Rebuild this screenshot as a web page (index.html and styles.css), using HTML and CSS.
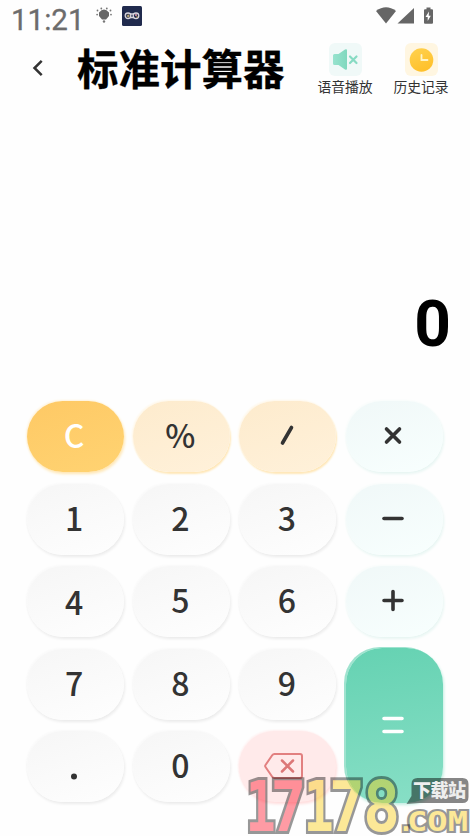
FILE: index.html
```html
<!DOCTYPE html>
<html lang="zh-CN">
<head>
<meta charset="utf-8">
<title>标准计算器</title>
<link rel="stylesheet" href="styles.css">
</head>
<body>
<div class="app">
  <div class="status">
    <span class="time">11:21</span>
    <svg class="sun" width="16" height="16" viewBox="0 0 16 16"><path d="M3 5.500Q8-.5 13 5.500v3.500l-3 3.500H6L3 9Z" fill="#666"/><g fill="#777"><circle cx="5.300" cy="1.500" r=".9"/><circle cx="10.800" cy="1.500" r=".9"/><circle cx="1.500" cy="3.500" r=".9"/><circle cx="14.500" cy="3.500" r=".9"/><circle cx="1.100" cy="7.600" r=".9"/><circle cx="15" cy="7.600" r=".9"/><circle cx="8" cy="14.500" r="1.200"/></g></svg>
    <svg class="game" width="20" height="20" viewBox="0 0 20 20"><rect width="20" height="20" rx="1.500" fill="#202a4d"/><g fill="none" stroke="#d8d4dc" stroke-width="1.300"><circle cx="6" cy="9.800" r="2.800"/><circle cx="14" cy="9.800" r="2.800"/><path d="M8 8h4M8 11.500h4"/></g><path d="M4.700 10h3M6.200 8.500v3" stroke="#d5bd7e"/><circle cx="14" cy="9" r="1" fill="#eda0ac"/><circle cx="15" cy="11" r=".7" fill="#d5b14e"/></svg>
    <svg class="signals" width="60" height="18" viewBox="0 0 60 18" fill="#666"><path d="M0 4Q10-3.500 20 4L10 16.500Z"/><path d="M38 1v15.500H21.500Z"/><path d="M49 2.300h1.500V.5h4v1.800H56q1 0 1 1v12.400q0 1-1 1h-7q-1 0-1-1V3.300q0-1 1-1Z"/><path d="M53 4.500l-3.500 5.500h2.200v4l3.100-5.300h-2.100Z" fill="#fff"/></svg>
  </div>
  <header class="bar">
    <svg class="back" width="12" height="18" viewBox="0 0 12 18"><path d="M9.700 1.800L2.500 9l7.200 7.200" fill="none" stroke="#333" stroke-width="2.500"/></svg>
    <h1>标准计算器</h1>
    <div class="tool voice">
      <svg width="33" height="33" viewBox="0 0 33 33"><defs><linearGradient id="g1" x2="1"><stop stop-color="#97e3ce"/><stop offset="1" stop-color="#80d8be"/></linearGradient></defs><rect width="33" height="33" rx="6" fill="#f0f9f8"/><path d="M5.500 11h4l6.500-4.500q2-1 2 1v18q0 2-2 1l-6.500-4.500h-4q-1.500 0-1.500-1.500v-8q0-1.500 1.500-1.500Z" fill="url(#g1)"/><path d="M21 13.500l6.500 6.500m0-6.500L21 20" stroke="#87dbc3" stroke-width="2.200" stroke-linecap="round"/></svg>
      <span>语音播放</span>
    </div>
    <div class="tool">
      <svg width="33" height="33" viewBox="0 0 33 33"><defs><linearGradient id="g2" x2=".4" y2="1"><stop stop-color="#ffd250"/><stop offset="1" stop-color="#ffc12c"/></linearGradient></defs><rect width="33" height="33" rx="6" fill="#fff6e1"/><circle cx="16.500" cy="17" r="11.800" fill="url(#g2)"/><path d="M16.500 12v5h6" fill="none" stroke="#fff4c7" stroke-width="1.800" stroke-linecap="round"/></svg>
      <span>历史记录</span>
    </div>
  </header>
  <div class="display">0</div>
  <main class="keys">
    <button class="key clear">C</button>
    <button class="key func">%</button>
    <button class="key func"><svg width="30" height="30" viewBox="0 0 30 30"><path d="M10.500 24L19.500 8.500"/></svg></button>
    <button class="key op"><svg width="30" height="30" viewBox="0 0 30 30"><path d="M9.500 10l13 13m0-13l-13 13"/></svg></button>
    <button class="key">1</button>
    <button class="key">2</button>
    <button class="key">3</button>
    <button class="key op"><svg width="30" height="30" viewBox="0 0 30 30"><path d="M7 16.500h18"/></svg></button>
    <button class="key low">4</button>
    <button class="key">5</button>
    <button class="key">6</button>
    <button class="key op"><svg width="30" height="30" viewBox="0 0 30 30"><path d="M7 16.500h18M16 7.500v18"/></svg></button>
    <button class="key">7</button>
    <button class="key">8</button>
    <button class="key">9</button>
    <button class="key equals"><svg width="30" height="30" viewBox="0 0 30 30"><path d="M7 9.500h18M7 22.500h18"/></svg></button>
    <button class="key"><svg width="30" height="30" viewBox="0 0 30 30"><circle class="dot" cx="15" cy="27.500" r="3"/></svg></button>
    <button class="key">0</button>
    <button class="key del"><svg width="40" height="26" viewBox="0 0 40 26"><path class="tag" d="M10.500 1H36q2 0 2 2v20q0 2-2 2H10.500q-1.500 0-2.300-1.200L1.500 14q-.7-1 0-2L8.200 2.200Q9 1 10.500 1Z"/><path class="x" d="M18 7.500l11 11m0-11l-11 11"/></svg></button>
  </main>
  <svg class="mark" width="226" height="62" viewBox="0 0 226 62">
    <g class="big">
      <text class="red" transform="translate(1.500 57) scale(.72 1)">1</text>
      <text class="red" transform="translate(26.500 57) scale(.85 1)">7</text>
      <text class="yellow" transform="translate(59.500 57) scale(.72 1)">1</text>
      <text class="yellow" transform="translate(85 57) scale(.85 1)">7</text>
      <text class="yellow" transform="translate(119 57) scale(.88 1)">8</text>
    </g>
    <path d="M183 4h37q6 0 6 6v13q0 6-6 6h-43l-13 1 5-8V10q0-6 6-6Z" transform="translate(-1.500 0)" fill="#000" fill-opacity=".47"/>
    <text x="169" y="23" textLength="53" class="site">下载站</text>
    <text x="154" y="57" class="com">.</text>
    <text x="163" y="57" textLength="61" lengthAdjust="spacingAndGlyphs" class="com">COM</text>
  </svg>
</div>
</body>
</html>
```
FILE: styles.css
```css
* { box-sizing: border-box; }
body { margin: 0; background: #fefefe; font-family: "Noto Sans CJK SC", sans-serif; color: #333; }
.app { position: relative; width: 470px; height: 836px; overflow: hidden; }
.status { display: flex; height: 38px; padding: 6px 34px 0 11px; }
.time { width: 85px; font: 400 29.5px/29px Roboto, sans-serif; color: #6c6c6c; -webkit-text-stroke: .3px #6c6c6c; }
.sun { margin-top: 1px; }
.game { margin: 0 0 0 10px; }
.signals { margin-left: auto; margin-top: 1px; }
.bar { display: flex; height: 66px; padding-left: 32px; }
.back { margin-top: 21px; }
h1 { width: 239px; margin: 0 0 0 33px; font-size: 41.5px; line-height: 59px; font-weight: 700; color: #000; white-space: nowrap; -webkit-text-stroke: .3px #000; }
.tool { display: flex; flex-direction: column; align-items: center; width: 60px; padding-top: 5px; font-size: 13.8px; line-height: 20px; white-space: nowrap; }
.tool span { margin-top: 0; }
.voice { margin: 0 16px 0 -1px; }
.tool svg { flex: none; }
.display { height: 296px; padding: 175px 19px 0 0; text-align: right; font: 700 64px/92px Roboto, sans-serif; color: #000; }
.keys { display: grid; grid-template-columns: repeat(4, 97px); grid-template-rows: repeat(5, 71px); column-gap: 9.4px; row-gap: 11.6px; padding: 1px 0 0 26.500px; }
.key { display: flex; align-items: center; justify-content: center; padding: 0 2px 5px 0; border: 0; border-radius: 36px; background: linear-gradient(160deg, #f6f6f6, #fefefe); box-shadow: 1px 2px 3px #ebebeb, -1px -1px 2px #f9f9f9; font: 500 32px/48px "Noto Sans CJK SC", sans-serif; color: #333; }
.key svg { flex: none; fill: none; stroke: #333; stroke-width: 3.6; stroke-linecap: round; overflow: visible; }
.key .dot { fill: #333; stroke: none; }
.low { padding-bottom: 2px; }
.op { padding-right: 4px; }
.clear { color: #fff; background: linear-gradient(160deg, #fec965, #ffd372); box-shadow: 1px 2px 3px #ffe6b2, -1px -1px 2px #fff3dd; }
.func { background: linear-gradient(160deg, #fdebcd, #fff1da); box-shadow: 1px 2px 2px #ffe7b7, -1px -1px 2px #fff7e8; }
.op { background: linear-gradient(160deg, #f0f8f8, #f8fffe); box-shadow: 1px 2px 3px #e6f5f2, -1px -1px 2px #f8fcfb; }
.equals { grid-column: 4; grid-row: 4 / 6; height: 155px; margin-top: -1px; padding: 0 4px 3px 0; background: linear-gradient(170deg, #65d2b2, #88dfc6); box-shadow: -2px -1px 0 #9fe3cf, 1px 2px 3px #c3eee2; }
.equals svg { stroke: #fff; }
.del { padding: 0 7px 1px 0; background: #ffeaea; box-shadow: 1px 2px 3px #ffdcdc, -1px -1px 2px #fff0f0; }
.key .tag { stroke: #e28080; stroke-width: 2; }
.key .x { stroke: #dc7777; stroke-width: 2.5; }
.mark { position: absolute; left: 244px; top: 774px; overflow: visible; }
.big { opacity: .4; font: 700 70px "DejaVu Sans Mono", monospace; stroke: #000; stroke-width: 6px; paint-order: stroke; stroke-linejoin: miter; }
.red { fill: #ff0a20; }
.yellow { fill: #fac800; }
.site { font: 900 18px "Noto Sans CJK SC", sans-serif; fill: #eee; }
.com { opacity: .4; font: 700 26px "DejaVu Sans Mono", monospace; fill: #fac800; stroke: #000; stroke-width: 4px; paint-order: stroke; stroke-linejoin: miter; }
```
